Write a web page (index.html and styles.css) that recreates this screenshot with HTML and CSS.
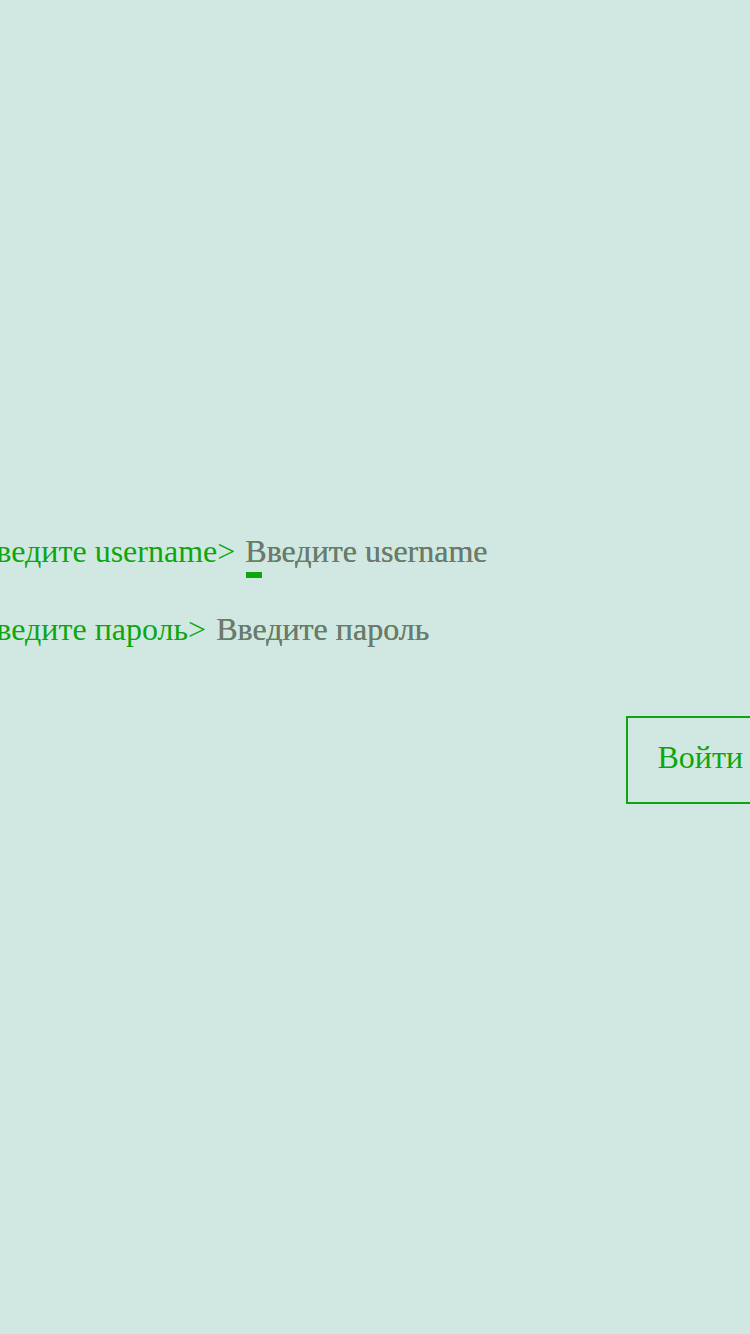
FILE: index.html
```html
<!DOCTYPE html>
<html lang="ru">
<head>
<meta charset="utf-8">
<meta name="viewport" content="width=device-width, initial-scale=1">
<title>Вход</title>
<link rel="stylesheet" href="styles.css">
</head>
<body>
<form class="login">
  <div class="row">
    <label class="prompt" for="username">Введите username&gt;</label>
    <div class="field">
      <input class="entry" id="username" type="text" placeholder="Введите username">
      <span class="cursor"></span>
    </div>
  </div>
  <div class="row">
    <label class="prompt" for="password">Введите пароль&gt;</label>
    <div class="field">
      <input class="entry" id="password" type="password" placeholder="Введите пароль">
    </div>
  </div>
  <button class="submit" type="submit">Войти</button>
</form>
</body>
</html>
```

FILE: styles.css
```css
:root {
  --green: #0da60d;
}

* {
  box-sizing: border-box;
}

body {
  margin: 0;
  min-height: 100vh;
  display: flex;
  flex-direction: column;
  justify-content: center;
  overflow: hidden;
  background: #d1e8e2;
  color: var(--green);
  font: 32px/36px "Liberation Serif", "Times New Roman", serif;
}

.login {
  display: flex;
  flex-direction: column;
  margin: 0 -25px;
}

.row {
  display: flex;
  gap: 10px;
  height: 48px;
  margin-bottom: 30px;
}

.prompt {
  white-space: nowrap;
  padding-top: 3px;
}

.field {
  position: relative;
  flex: 1;
}

.entry {
  display: block;
  width: 100%;
  height: 36px;
  margin-top: 3px;
  padding: 0;
  border: 0;
  outline: 0;
  background: none;
  color: var(--green);
  font: inherit;
}

.entry::placeholder {
  color: #757575;
  opacity: 1;
  text-shadow: 0 0 0 var(--green);
}

.cursor {
  position: absolute;
  left: 1px;
  bottom: 0;
  width: 16px;
  height: 6px;
  background: var(--green);
}

.submit {
  align-self: flex-end;
  margin-top: 30px;
  padding: 21px 30px 27px 29px;
  border: 2px solid var(--green);
  border-radius: 0;
  background: none;
  color: var(--green);
  font: inherit;
}
```
